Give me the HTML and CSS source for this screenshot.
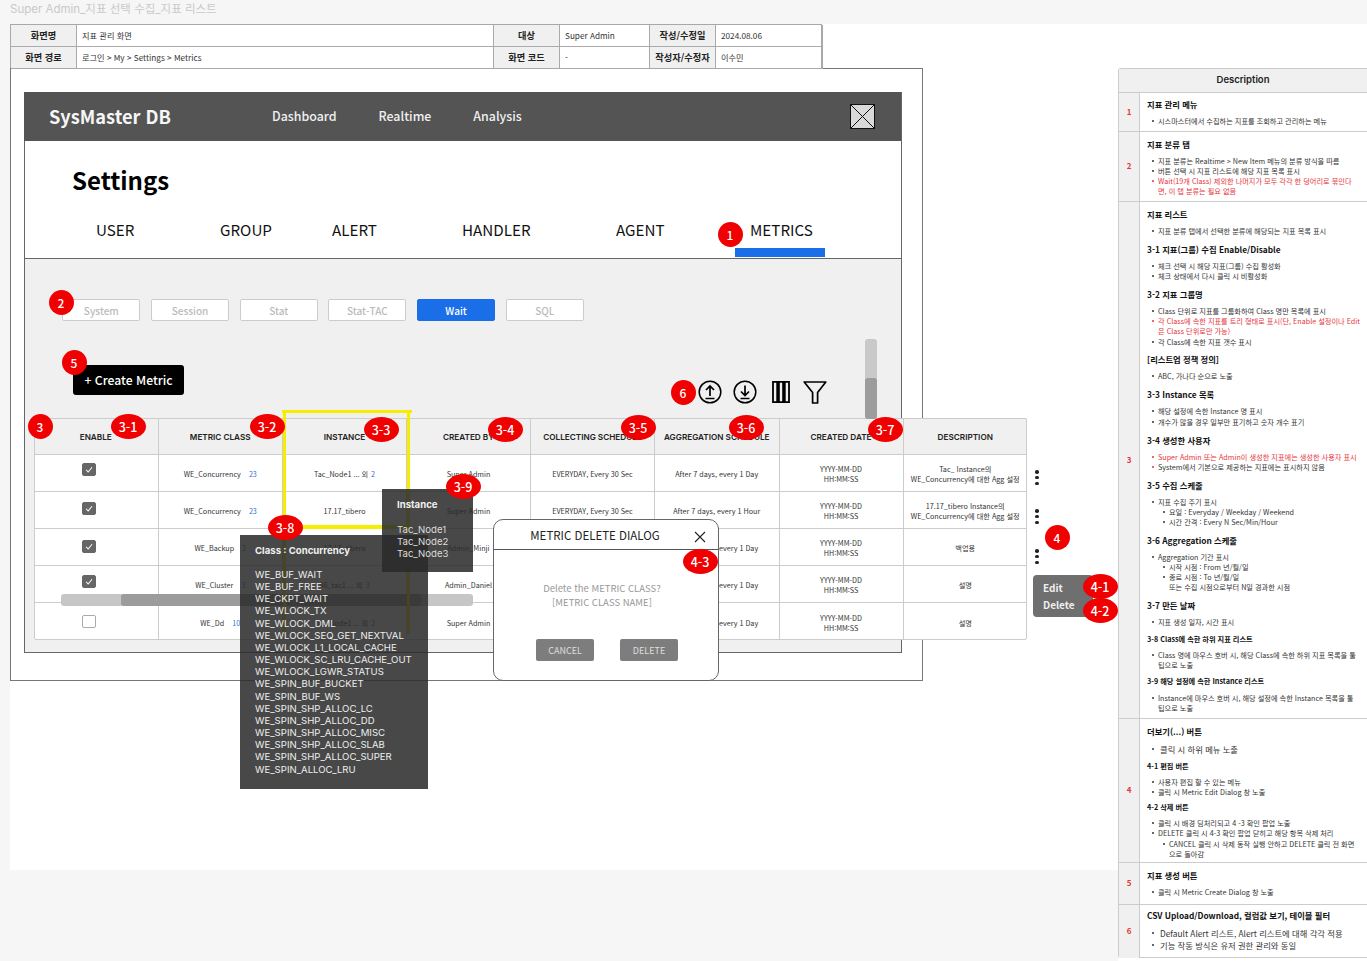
FILE: index.html
```html
<!DOCTYPE html>
<html lang="ko">
<head>
<meta charset="utf-8">
<title>Super Admin_지표 선택 수집_지표 리스트</title>
<link rel="stylesheet" href="styles.css">
</head>
<body>
<div class="page">
  <main class="left">
    <div class="doc-title">Super Admin_지표 선택 수집_지표 리스트</div>
    <div class="meta">
      <div class="m-l">화면명</div><div class="m-v">지표 관리 화면</div><div class="m-l">대상</div><div class="m-v">Super Admin</div><div class="m-l">작성/수정일</div><div class="m-v">2024.08.06</div>
      <div class="m-l">화면 경로</div><div class="m-v">로그인 &gt; My &gt; Settings &gt; Metrics</div><div class="m-l">화면 코드</div><div class="m-v">-</div><div class="m-l">작성자/수정자</div><div class="m-v">이수민</div>
    </div>
    <div class="frame">
      <div class="screen">
        <header class="topbar">
          <div class="logo">SysMaster DB</div>
          <nav class="gnb"><span>Dashboard</span><span>Realtime</span><span>Analysis</span></nav>
          <svg class="avatar" viewBox="0 0 25 25"><rect x=".5" y=".5" width="24" height="24" fill="#d9d9d9" stroke="#111"/><path d="M.5.5l24 24M24.5.5l-24 24" stroke="#111" fill="none"/></svg>
        </header>
        <section class="head">
          <h1>Settings</h1>
          <div class="tabs"><span>USER</span><span>GROUP</span><span>ALERT</span><span>HANDLER</span><span>AGENT</span><span class="on">METRICS</span></div>
        </section>
        <section class="body">
          <div class="filters"><button>System</button><button>Session</button><button>Stat</button><button>Stat-TAC</button><button class="on">Wait</button><button>SQL</button></div>
          <div class="actions">
            <button class="create">+ Create Metric</button>
            <div class="tools">
              <svg class="t-up" viewBox="0 0 24 24"><circle cx="12" cy="12" r="10.8" fill="none" stroke="#000" stroke-width="1.5"/><path d="M12 16V6.5M8 10l4-4 4 4M7.5 18.5h9" fill="none" stroke="#000" stroke-width="1.7"/></svg>
              <svg class="t-down" viewBox="0 0 24 24"><circle cx="12" cy="12" r="10.8" fill="none" stroke="#000" stroke-width="1.5"/><path d="M12 5.5V15M8 11.5l4 4 4-4M7.5 18.5h9" fill="none" stroke="#000" stroke-width="1.7"/></svg>
              <svg class="t-col" viewBox="0 0 18 22"><path d="M1 .9h4.2v20.2H1zM6.9.9h4.2v20.2H6.9zM12.8.9H17v20.2h-4.2z" fill="none" stroke="#000" stroke-width="1.8"/></svg>
              <svg class="t-fil" viewBox="0 0 24 23"><path d="M1.2 1h21.6L14.6 11.5V22h-5V11.5z" fill="none" stroke="#000" stroke-width="1.7" stroke-linejoin="round"/></svg>
            </div>
          </div>
          <div class="grid">
            <div class="th">ENABLE</div><div class="th">METRIC CLASS</div><div class="th">INSTANCE</div><div class="th">CREATED BY</div><div class="th">COLLECTING SCHEDULE</div><div class="th">AGGREGATION SCHEDULE</div><div class="th">CREATED DATE</div><div class="th">DESCRIPTION</div>

            <div class="td"><i class="chk on c1"></i></div><div class="td"><span>WE_Concurrency</span><b class="cnt">23</b></div><div class="td">Tac_Node1 ... 외<b class="cnt near">2</b></div><div class="td">Super Admin</div><div class="td">EVERYDAY, Every 30 Sec</div><div class="td">After 7 days, every 1 Day</div><div class="td col">YYYY-MM-DD<br>HH:MM:SS</div><div class="td col">Tac_ Instance의<br>WE_Concurrency에 대한 Agg 설정</div>

            <div class="td"><i class="chk on c2"></i></div><div class="td"><span>WE_Concurrency</span><b class="cnt">23</b></div><div class="td">17.17_tibero</div><div class="td">Super Admin</div><div class="td">EVERYDAY, Every 30 Sec</div><div class="td">After 7 days, every 1 Hour</div><div class="td col">YYYY-MM-DD<br>HH:MM:SS</div><div class="td col">17.17_tibero Instance의<br>WE_Concurrency에 대한 Agg 설정</div>

            <div class="td"><i class="chk on c3"></i></div><div class="td"><span>WE_Backup</span><b class="cnt">2</b></div><div class="td">17.17_tibero</div><div class="td">Admin_Minji</div><div class="td">EVERYDAY, Every 30 Sec</div><div class="td">After 7 days, every 1 Day</div><div class="td col">YYYY-MM-DD<br>HH:MM:SS</div><div class="td col">백업용</div>

            <div class="td"><i class="chk on c4"></i></div><div class="td"><span>WE_Cluster</span><b class="cnt">3</b></div><div class="td">46_tac1 ... 외<b class="cnt near">3</b></div><div class="td">Admin_Daniel</div><div class="td">EVERYDAY, Every 30 Sec</div><div class="td">After 7 days, every 1 Day</div><div class="td col">YYYY-MM-DD<br>HH:MM:SS</div><div class="td col">설명</div>

            <div class="td"><i class="chk c5"></i></div><div class="td"><span>WE_Dd</span><b class="cnt">10</b></div><div class="td">Tac_Node1 ... 외<b class="cnt near">2</b></div><div class="td">Super Admin</div><div class="td">EVERYDAY, Every 30 Sec</div><div class="td">After 7 days, every 1 Day</div><div class="td col">YYYY-MM-DD<br>HH:MM:SS</div><div class="td col">설명</div>
          </div>
        </section>
      </div>
    </div>

    <div class="vscroll"><div class="vthumb"></div></div>
    <div class="hscroll"><div class="hthumb"></div></div>
    <div class="hl hl-box"></div>
    <div class="hl hl-line-l"></div>
    <div class="hl hl-line-r"></div>

    <div class="kebab k1"><i></i><i></i><i></i></div>
    <div class="kebab k2"><i></i><i></i><i></i></div>
    <div class="kebab k3"><i></i><i></i><i></i></div>
    <div class="menu"><span>Edit</span><span>Delete</span></div>

    <div class="tip tip-class">
      <strong>Class : Concurrency</strong>
      <p>WE_BUF_WAIT<br>WE_BUF_FREE<br>WE_CKPT_WAIT<br>WE_WLOCK_TX<br>WE_WLOCK_DML<br>WE_WLOCK_SEQ_GET_NEXTVAL<br>WE_WLOCK_L1_LOCAL_CACHE<br>WE_WLOCK_SC_LRU_CACHE_OUT<br>WE_WLOCK_LGWR_STATUS<br>WE_SPIN_BUF_BUCKET<br>WE_SPIN_BUF_WS<br>WE_SPIN_SHP_ALLOC_LC<br>WE_SPIN_SHP_ALLOC_DD<br>WE_SPIN_SHP_ALLOC_MISC<br>WE_SPIN_SHP_ALLOC_SLAB<br>WE_SPIN_SHP_ALLOC_SUPER<br>WE_SPIN_ALLOC_LRU</p>
    </div>
    <div class="tip tip-inst">
      <strong>Instance</strong>
      <p>Tac_Node1<br>Tac_Node2<br>Tac_Node3</p>
    </div>

    <div class="dialog">
      <div class="d-head"><span>METRIC DELETE DIALOG</span><svg viewBox="0 0 12 12"><path d="M1 1l10 10M11 1L1 11" stroke="#222" stroke-width="1.1" fill="none"/></svg></div>
      <div class="d-msg">Delete the METRIC CLASS?<br>[METRIC CLASS NAME]</div>
      <div class="d-btns"><button>CANCEL</button><button>DELETE</button></div>
    </div>

    <span class="bd" style="left:730px;top:234px">1</span>
    <span class="bd" style="left:61px;top:302px">2</span>
    <span class="bd" style="left:74px;top:362px">5</span>
    <span class="bd" style="left:683px;top:392px">6</span>
    <span class="bd" style="left:40px;top:426px">3</span>
    <span class="bd w" style="left:128px;top:426px">3-1</span>
    <span class="bd w" style="left:267px;top:426px">3-2</span>
    <span class="bd w" style="left:381px;top:429px">3-3</span>
    <span class="bd w" style="left:505px;top:429px">3-4</span>
    <span class="bd w" style="left:638px;top:427px">3-5</span>
    <span class="bd w" style="left:746px;top:427px">3-6</span>
    <span class="bd w" style="left:885px;top:429px">3-7</span>
    <span class="bd w" style="left:285px;top:527px">3-8</span>
    <span class="bd w" style="left:463px;top:486px">3-9</span>
    <span class="bd" style="left:1057px;top:537px">4</span>
    <span class="bd w" style="left:1100px;top:586px">4-1</span>
    <span class="bd w" style="left:1100px;top:610px">4-2</span>
    <span class="bd w" style="left:700px;top:561px">4-3</span>
  </main>

  <aside class="desc">
    <div class="d-top">Description</div>
    <div class="d-row"><div class="no">1</div><div class="txt first">
      <h4>지표 관리 메뉴</h4><ul><li>시스마스터에서 수집하는 지표를 조회하고 관리하는 메뉴</li></ul>
    </div></div>
    <div class="d-row"><div class="no">2</div><div class="txt">
      <h4>지표 분류 탭</h4><ul><li>지표 분류는 Realtime &gt; New Item 메뉴의 분류 방식을 따름</li><li>버튼 선택 시 지표 리스트에 해당 지표 목록 표시</li><li class="red">Wait(19개 Class) 제외한 나머지가 모두 각각 한 덩어리로 묶인다<br>면, 이 탭 분류는 필요 없음</li></ul>
    </div></div>
    <div class="d-row"><div class="no">3</div><div class="txt">
      <h4>지표 리스트</h4><ul><li>지표 분류 탭에서 선택한 분류에 해당되는 지표 목록 표시</li></ul>
      <h4>3-1 지표(그룹) 수집 Enable/Disable</h4><ul><li>체크 선택 시 해당 지표(그룹) 수집 활성화</li><li>체크 상태에서 다시 클릭 시 비활성화</li></ul>
      <h4>3-2 지표 그룹명</h4><ul><li>Class 단위로 지표를 그룹화하여 Class 명만 목록에 표시</li><li class="red">각 Class에 속한 지표를 트리 형태로 표시(단, Enable 설정이나 Edit<br>은 Class 단위로만 가능)</li><li>각 Class에 속한 지표 갯수 표시</li></ul>
      <h4>[리스트업 정책 정의]</h4><ul><li>ABC, 가나다 순으로 노출</li></ul>
      <h4>3-3 Instance 목록</h4><ul><li>해당 설정에 속한 Instance 명 표시</li><li>개수가 많을 경우 일부만 표기하고 숫자 개수 표기</li></ul>
      <h4>3-4 생성한 사용자</h4><ul><li class="red">Super Admin 또는 Admin이 생성한 지표에는 생성한 사용자 표시</li><li class="redmark">System에서 기본으로 제공하는 지표에는 표시하지 않음</li></ul>
      <h4>3-5 수집 스케줄</h4><ul><li>지표 수집 주기 표시<ul><li>요일 : Everyday / Weekday / Weekend</li><li>시간 간격 : Every N Sec/Min/Hour</li></ul></li></ul>
      <h4>3-6 Aggregation 스케줄</h4><ul><li>Aggregation 기간 표시<ul><li>시작 시점 : From 년/월/일</li><li>종료 시점 : To 년/월/일<br>또는 수집 시점으로부터 N일 경과한 시점</li></ul></li></ul>
      <h4>3-7 만든 날짜</h4><ul class="tight"><li>지표 생성 일자, 시간 표시</li></ul>
      <h5>3-8 Class에 속한 하위 지표 리스트</h5><ul class="tight"><li>Class 명에 마우스 호버 시, 해당 Class에 속한 하위 지표 목록을 툴<br>팁으로 노출</li></ul>
      <h5>3-9 해당 설정에 속한 Instance 리스트</h5><ul><li>Instance에 마우스 호버 시, 해당 설정에 속한 Instance 목록을 툴<br>팁으로 노출</li></ul>
    </div></div>
    <div class="d-row"><div class="no">4</div><div class="txt more">
      <h4>더보기(...) 버튼</h4><ul class="big tight"><li>클릭 시 하위 메뉴 노출</li></ul>
      <h5>4-1 편집 버튼</h5><ul class="tight"><li>사용자 편집 할 수 있는 메뉴</li><li>클릭 시 Metric Edit Dialog 창 노출</li></ul>
      <h5>4-2 삭제 버튼</h5><ul><li>클릭 시 배경 딤처리되고 4 -3 확인 팝업 노출</li><li>DELETE  클릭 시 4-3 확인 팝업 닫히고 해당 항목 삭제 처리<ul><li>CANCEL 클릭 시 삭제 동작 실행 안하고 DELETE 클릭 전 화면<br>으로 돌아감</li></ul></li></ul>
    </div></div>
    <div class="d-row"><div class="no">5</div><div class="txt">
      <h4>지표 생성 버튼</h4><ul><li>클릭 시 Metric Create Dialog  창 노출</li></ul>
    </div></div>
    <div class="d-row"><div class="no">6</div><div class="txt last">
      <h4>CSV Upload/Download, 컬럼값 보기, 테이블 필터</h4><ul class="big"><li>Default Alert 리스트, Alert 리스트에 대해 각각 적용</li><li>기능 작동 방식은 유저 권한 관리와 동일</li></ul>
    </div></div>
  </aside>
</div>
</body>
</html>
```

FILE: styles.css
```css
* { box-sizing: border-box; }
html, body { margin: 0; padding: 0; }
body {
  background: #fff;
  font-family: "Noto Sans CJK KR", "Noto Sans", sans-serif;
  color: #222;
  overflow: hidden;
}
button { font-family: inherit; cursor: default; }

.page {
  position: relative;
  width: 1367px;
  height: 961px;
  display: grid;
  grid-template-columns: 1118px 249px;
  overflow: hidden;
  background: linear-gradient(#f6f6f6, #f6f6f6) 0 0 / 100% 24px no-repeat, #fff;
}
.left {
  padding-left: 10px;
  background: linear-gradient(#fff, #fff) 10px 24px / 1108px 846px no-repeat, #f6f6f6;
}
.doc-title {
  height: 24px;
  font: 400 11.5px/18px Inter, "Noto Sans CJK KR", sans-serif;
  color: #c9c9c9;
}

/* document meta */
.meta {
  width: 812px;
  height: 44px;
  display: grid;
  grid-template-columns: 66px 417px 66px 90px 66px 107px;
  grid-template-rows: 22px 22px;
  background: #fff;
  border: 1px solid #a8a8a8;
  border-bottom: 0;
}
.meta > div {
  display: flex;
  align-items: center;
  font-size: 8.2px;
  padding-bottom: 2px;
  border-bottom: 1px solid #aaa;
  border-right: 1px solid #aaa;
}
.m-l { justify-content: center; background: #f0f0f0; font-weight: 700; font-size: 9.2px !important; color: #222; }
.m-v { padding-left: 5px; color: #333; }

/* frame */
.frame {
  width: 913px;
  height: 613px;
  background: #fff;
  border: 1px solid #777;
  padding: 23px 20px 26px 13px;
}
.screen {
  width: 878px;
  height: 561px;
  border: 1px solid #666;
  border-top: 0;
  display: flex;
  flex-direction: column;
}
.topbar {
  height: 49px;
  margin-left: -1px;
  background: #545454;
  display: flex;
  align-items: center;
  padding: 0 0 2px 25px;
  color: #fff;
}
.logo { width: 223px; font-size: 18.2px; font-weight: 700; color: #f6f6f6; }
.gnb { display: flex; gap: 42px; font-size: 12.4px; font-weight: 500; flex: 1; color: #f0f0f0; }
.avatar { width: 25px; height: 25px; margin: 2px 26px 0 0; }

.head { height: 118px; border-bottom: 1px solid #666; background: #fff; }
h1 { margin: 0; padding: 21px 0 0 47px; font-size: 24px; line-height: 36px; font-weight: 700; color: #000; }
.tabs {
  display: grid;
  grid-template-columns: 124px 112px 130px 154px 134px auto;
  padding: 20px 0 0 71px;
  font-size: 15.2px;
  line-height: 22px;
  color: #111;
}
.tabs .on { position: relative; }
.tabs .on::after {
  content: "";
  position: absolute;
  left: -15px;
  top: 30px;
  width: 90px;
  height: 9px;
  background: #1a6fe8;
}

.body { flex: 1; background: #f0f0f0; }
.filters { display: flex; gap: 10.7px; padding: 40px 0 0 37.3px; }
.filters button {
  width: 78px;
  height: 22px;
  padding: 0;
  background: #fff;
  border: 1px solid #ccc;
  border-radius: 2px;
  font-size: 10px;
  font-weight: 500;
  color: #bbb;
}
.filters .on { background: #1a6fe8; border-color: #1a6fe8; color: #fff; }
.actions { display: flex; justify-content: space-between; align-items: flex-start; padding: 44px 0 0 48px; height: 97px; }
.create {
  width: 111px;
  height: 30px;
  padding: 0;
  border: 0;
  border-radius: 3px;
  background: #000;
  color: #fff;
  font-size: 12.2px;
  font-weight: 500;
}
.tools { display: flex; align-items: center; margin: 15px 74px 0 0; }
.tools svg { display: block; }
.t-up, .t-down { width: 24px; height: 24px; }
.t-down { margin-left: 11px; }
.t-col { width: 18px; height: 22px; margin-left: 15px; }
.t-fil { width: 24px; height: 23px; margin-left: 13px; }

.grid {
  margin-left: 9px;
  width: 993px;
  height: 222px;
  display: grid;
  grid-template-columns: 124.5px 124.5px 124px 124px 124px 124.5px 124px 123.5px;
  grid-template-rows: repeat(6, 37px);
  background: #fff;
  outline: 1px solid #ccc;
  outline-offset: -1px;
  border-radius: 2px;
}
.th {
  display: flex;
  align-items: center;
  justify-content: center;
  background: #f0f0f0;
  border-bottom: 1px solid #ccc;
  border-right: 1px solid #ccc;
  font: 600 8.2px Inter, sans-serif;
  color: #222;
  padding-top: 1px;
  white-space: nowrap;
}
.td {
  display: flex;
  align-items: center;
  justify-content: center;
  padding-top: 2px;
  border-bottom: 1px solid #ccc;
  border-right: 1px solid #ccc;
  font-size: 7.2px;
  line-height: 10px;
  color: #333;
  text-align: center;
  white-space: nowrap;
}
.th:nth-child(8n), .td:nth-child(8n) { border-right: 0; }
.td:nth-last-child(-n+8) { border-bottom: 0; }
.col { flex-direction: column; }
.cnt { font-weight: 400; color: #2f74d6; margin-left: 8px; }
.cnt.near { margin-left: 3px; }
.chk {
  display: block;
  width: 14px;
  height: 13px;
  margin-right: 14px;
  border: 1px solid #aaa;
  border-radius: 2px;
  background: #fff;
}
.chk.on {
  border-color: #666;
  background: #666 url("data:image/svg+xml,%3Csvg xmlns='http://www.w3.org/2000/svg' viewBox='0 0 14 13'%3E%3Cpath d='M3.5 6.8l2.5 2.6 4.6-5.6' fill='none' stroke='%23fff' stroke-width='1.2'/%3E%3C/svg%3E") center / 100% 100% no-repeat;
}
.c1 { margin-bottom: 10px; }
.c2 { margin-bottom: 6px; }
.c3 { margin-bottom: 4px; }
.c4 { margin-bottom: 8px; }
.c5 { margin-bottom: 2px; }

/* overlays on the wireframe */
.vscroll { position: absolute; left: 865px; top: 339px; width: 12px; height: 80px; border-radius: 3px; background: #c9c9c9; }
.vthumb { margin-top: 39px; height: 41px; border-radius: 3px; background: #9c9c9c; }
.hscroll { position: absolute; left: 61px; top: 594px; width: 412px; height: 12px; border-radius: 3px; background: #c6c6c6; }
.hthumb { margin-left: 60px; width: 300px; height: 12px; border-radius: 3px; background: #9c9c9c; }

.hl { position: absolute; background: #f5ee00; }
.hl-box { left: 282px; top: 410px; width: 130px; height: 3px; }
.hl-box::after { content: ""; position: absolute; left: 2px; top: 115px; width: 126px; height: 4px; background: #f5ee00; }
.hl-line-l { left: 283px; top: 412px; width: 3px; height: 222px; }
.hl-line-r { left: 407px; top: 412px; width: 3px; height: 222px; }

.kebab { position: absolute; left: 1035px; display: flex; flex-direction: column; gap: 2.2px; }
.kebab i { display: block; width: 3.6px; height: 3.6px; border-radius: 50%; background: #222; }
.k1 { top: 470px; }
.k2 { top: 509px; }
.k3 { top: 549px; }

.menu {
  position: absolute;
  left: 1033px;
  top: 575px;
  width: 60px;
  height: 42px;
  padding: 4px 0 0 10px;
  border-radius: 4px;
  background: #6f6f6f;
  color: #eee;
  font-size: 10px;
  font-weight: 700;
  line-height: 17px;
  display: flex;
  flex-direction: column;
}

.tip {
  position: absolute;
  background: rgba(42, 42, 42, .86);
  color: #eee;
  font: 400 9.6px/12.15px Inter, sans-serif;
  padding-left: 15px;
}
.tip strong { display: block; font-weight: 700; font-size: 9.6px; line-height: 12px; color: #f0f0f0; }
.tip p { margin: 0; }
.tip-class { left: 240px; top: 535px; width: 188px; height: 254px; padding-top: 10px; }
.tip-class p { margin-top: 12px; }
.tip-inst { left: 382px; top: 489px; width: 91px; height: 83px; padding-top: 10px; }
.tip-inst p { margin-top: 13px; color: #ddd; }

.dialog {
  position: absolute;
  left: 493px;
  top: 519px;
  width: 226px;
  height: 162px;
  background: #fff;
  border: 1px solid #666;
  border-radius: 10px;
}
.d-head {
  position: relative;
  height: 30px;
  border-bottom: 1px solid #555;
  display: flex;
  align-items: center;
  justify-content: center;
  font-size: 11.5px;
  color: #222;
  padding-right: 22px;
}
.d-head svg { position: absolute; right: 12px; top: 11px; width: 12px; height: 12px; }
.d-msg { padding: 31px 8px 0 0; text-align: center; font-size: 9.5px; line-height: 14px; color: #999; }
.d-btns { display: flex; gap: 26px; padding: 30px 0 0 42px; }
.d-btns button {
  width: 58px;
  height: 22px;
  padding: 0;
  border: 0;
  border-radius: 2px;
  background: #7d7d7d;
  color: #ddd;
  font-size: 9px;
}

.bd {
  position: absolute;
  width: 25px;
  height: 25px;
  margin: -12.5px 0 0 -12.5px;
  border-radius: 50%;
  background: #f00000;
  color: #fff;
  font-size: 12px;
  font-weight: 500;
  line-height: 25px;
  text-align: center;
  z-index: 5;
}
.bd.w { width: 35px; margin-left: -17.5px; font-size: 12.5px; }

/* description */
.desc {
  margin-top: 68px;
  height: 890px;
  display: grid;
  grid-template-rows: 24px 39px 70px 517px 144px 42px 53px;
  background: #fff;
  border-left: 1px solid #ccc;
  border-bottom: 1px solid #ccc;
  border-top: 1px solid #ccc;
  border-radius: 3px 0 0 3px;
  font-size: 7.2px;
  line-height: 10.15px;
  color: #333;
}
.d-top {
  background: #f0f0f0;
  border-bottom: 1px solid #ccc;
  padding-bottom: 2px;
  display: flex;
  align-items: center;
  justify-content: center;
  font: 600 9.5px Inter, sans-serif;
  color: #222;
}
.d-row { display: flex; border-bottom: 1px solid #ccc; }
.d-row:last-child { border-bottom: 0; }
.no {
  width: 21px;
  flex: none;
  background: #f0f0f0;
  border-right: 1px solid #ccc;
  display: flex;
  align-items: center;
  justify-content: center;
  color: #e8333c;
  font-size: 8px;
  font-weight: 700;
}
.txt { flex: 1; padding: 6px 0 0 7px; min-width: 0; white-space: nowrap; }
.txt.first { padding-top: 5px; }
.txt.last { padding-top: 4px; }
h4 { margin: 0 0 6px; font-size: 8.3px; line-height: 12px; font-weight: 700; color: #111; }
h5 { margin: 0 0 5.5px; font-size: 7.2px; line-height: 12px; font-weight: 700; color: #111; }
.txt ul { margin: 0 0 6.8px; padding: 0 0 0 11px; list-style: none; }
.txt ul.tight { margin-bottom: 5px; }
.txt.more ul.tight { margin-bottom: 3.5px; }
.txt.more ul.big.tight { margin-bottom: 4.5px; }
.txt ul ul { margin: 0; }
.txt li { position: relative; }
.txt li::before {
  content: "";
  position: absolute;
  left: -6.5px;
  top: 4px;
  width: 2px;
  height: 2px;
  border-radius: 50%;
  background: #333;
}
.txt li.red { color: #e8333c; }
.txt li.red::before, .txt li.redmark::before { background: #e8333c; }
.txt ul.big { font-size: 8.3px; line-height: 12px; padding-left: 13px; }
.txt ul.big li::before { left: -8px; top: 5px; }
```
